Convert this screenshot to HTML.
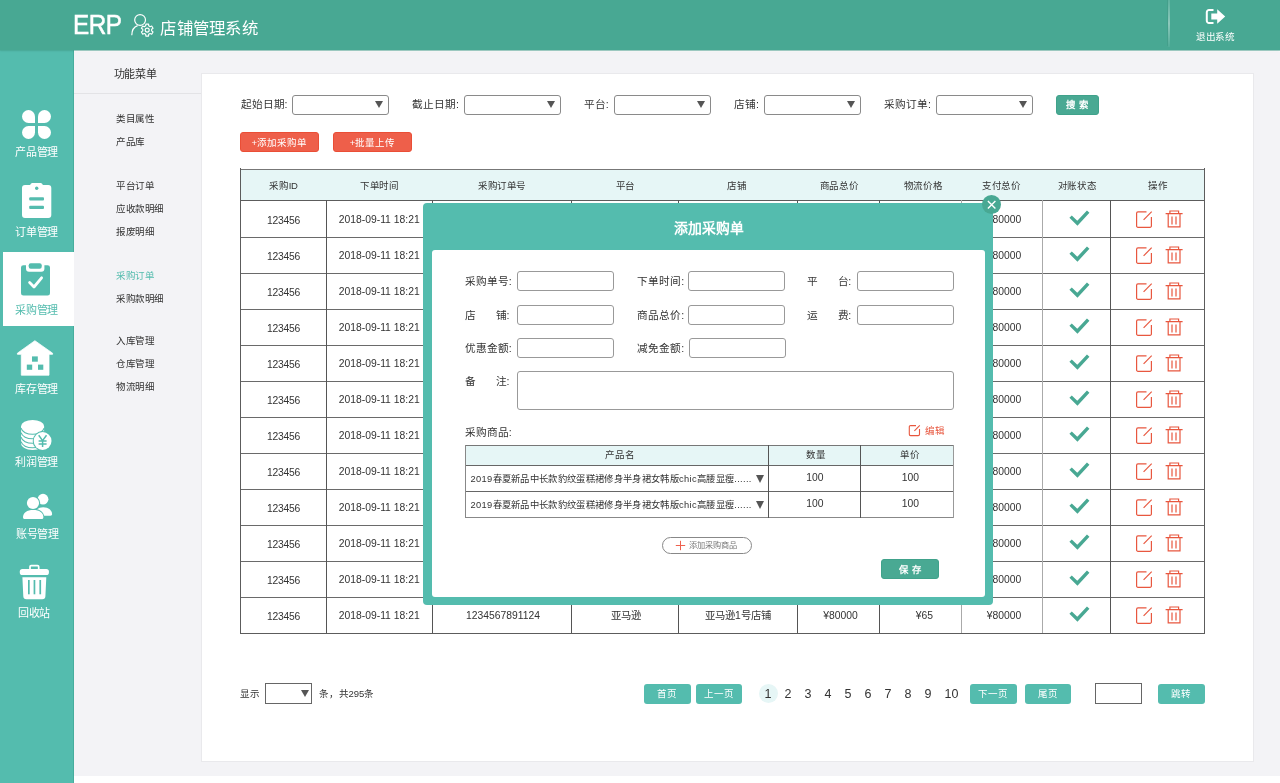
<!DOCTYPE html>
<html lang="zh-CN"><head><meta charset="utf-8"><title>ERP</title><style>
*{box-sizing:border-box;margin:0;padding:0}
html,body{width:1280px;height:783px;overflow:hidden;background:#fff}
body{font-family:"Liberation Sans",sans-serif;color:#333;position:relative;font-size:10.67px}
.abs,.abs *{position:absolute}
div,span,svg{position:absolute}
.t{white-space:nowrap;line-height:1}
.c{transform:translate(-50%,-50%)}
.cy{transform:translateY(-50%)}
#hdr{left:0;top:0;width:1280px;height:50px;background:#48a893;box-shadow:0 1px 0 rgba(72,168,147,.45),0 1px 2px rgba(0,0,0,.10)}
#side{left:0;top:50px;width:74px;height:733px;background:#54bcae;border-right:1px solid #46ad9d}
#sub{left:74px;top:50px;width:1206px;height:725.5px;background:#f3f3f6}
#panel{left:201px;top:73px;width:1053px;height:689px;background:#fff;border:1px solid #e9e9ec}
.sl{color:#fff;font-size:11px;left:36.6px;letter-spacing:-0.2px}
.mi{left:116px;font-size:9.5px;color:#333;letter-spacing:-0.5px}
.sel{height:20px;width:97px;border:1px solid #8a8a8a;border-radius:3px;background:#fff}
.tri{width:0;height:0;border-left:4px solid transparent;border-right:4px solid transparent;border-top:7px solid #555}
.inp{height:20px;width:97px;border:1px solid #999;border-radius:3px;background:#fff}
.lab{font-size:10.67px;color:#333}
.rbtn{height:20px;background:#ee5f4a;border:1px solid #ea4e36;border-radius:3px;top:132px}
.rbtn span{color:#fff;font-size:9.5px;left:50%;top:calc(50% + 0.8px)}
.gbtn{background:#49a993;border:1px solid #40a28b;border-radius:3px}
.gbtn span{color:#fff;left:50%;top:50%}
.pbtn{background:#54bcae;border-radius:3px;height:20px;top:683.5px;width:46.5px}
.pbtn span{color:#fff;font-size:9.5px;left:50%;top:50%}
.pn{font-size:12.5px;color:#333;top:693.5px}
.th{font-size:9.5px;color:#333;top:185.5px;letter-spacing:-0.35px}
.td{font-size:10.35px;color:#333}
.hl{height:1px;background:#666;left:240px;width:965px}
.vl{width:1px;background:#555;top:169px;height:464px}
</style></head><body><div id="wrap" style="left:0;top:0;width:1280px;height:783px;will-change:transform">
<div id="sub"></div>
<div style="left:74px;top:93px;width:127px;height:1px;background:#e3e3e6"></div>
<div style="left:74px;top:51px;width:1206px;height:1px;background:rgba(255,255,255,.75)"></div>
<div id="panel"></div>
<div id="side"></div>
<div id="hdr"></div>
<span class="t" style="left:73.2px;top:11.7px;font-size:27px;color:#fff;letter-spacing:-0.6px;transform-origin:0 0;transform:scaleX(.9);-webkit-text-stroke:0.5px #fff">ERP</span>
<svg style="left:128px;top:12px" width="30" height="26" viewBox="128 12 30 26" fill="none" stroke="#fff" stroke-width="1.2">
<circle cx="140.1" cy="20" r="5.4"/>
<path d="M131.8 35.2 C131.8 30 134 26.8 137.6 25.6"/>
<circle cx="147.2" cy="30.1" r="6.6" fill="#48a893" stroke="none"/><path d="M151.63 30.90 L153.02 31.92 L151.69 34.23 L150.10 33.54 L148.72 34.33 L148.53 36.05 L145.87 36.05 L145.68 34.33 L144.30 33.54 L142.71 34.23 L141.38 31.92 L142.77 30.90 L142.77 29.30 L141.38 28.28 L142.71 25.97 L144.30 26.66 L145.68 25.87 L145.87 24.15 L148.53 24.15 L148.72 25.87 L150.10 26.66 L151.69 25.97 L153.02 28.28 L151.63 29.30 Z" stroke-linejoin="round" stroke-width="1.15"/><circle cx="147.2" cy="30.1" r="2" stroke-width="1.15"/>
</svg>
<span class="t" style="left:160.3px;top:20.4px;font-size:16.4px;letter-spacing:0.3px;color:#fff">店铺管理系统</span>
<div style="left:1168px;top:0;width:2px;height:47px;background:linear-gradient(to bottom,rgba(255,255,255,.12),rgba(255,255,255,.38) 50%,rgba(255,255,255,.05))"></div>
<div style="left:1167px;top:0;width:1px;height:46px;background:rgba(0,0,0,.05)"></div>
<svg style="left:1204px;top:7px" width="24" height="20" viewBox="1204 7 24 20">
<path d="M1213.5 10 H1209 a2.2 2.2 0 0 0 -2.2 2.2 V20.8 a2.2 2.2 0 0 0 2.2 2.2 H1213.5" fill="none" stroke="#fff" stroke-width="2"/>
<path d="M1211.3 13.6 H1217.2 V9.2 L1225.2 16.5 L1217.2 23.8 V19.4 H1211.3 Z" fill="#fff"/>
</svg>
<span class="t c" style="left:1215.2px;top:37.45px;font-size:9.6px;letter-spacing:-0.4px;color:#fff">退出系统</span>
<div style="left:3px;top:252px;width:71px;height:73.5px;background:#fff"></div>
<div style="left:22px;top:110px;width:13px;height:13px;background:#fff;border-radius:50% 50% 0 50%"></div>
<div style="left:38px;top:110px;width:13px;height:13px;background:#fff;border-radius:50% 50% 50% 0"></div>
<div style="left:22px;top:125.5px;width:13px;height:13px;background:#fff;border-radius:50% 0 50% 50%"></div>
<div style="left:38px;top:125.5px;width:13px;height:13px;background:#fff;border-radius:0 50% 50% 50%"></div>
<span class="t c sl" style="top:152px">产品管理</span>
<svg style="left:20px;top:181px" width="34" height="40" viewBox="20 181 34 40">
<path d="M25 185 H30.2 C30.6 183.6 31.6 183 33 183 H40 C41.4 183 42.4 183.6 42.8 185 H48.3 a3 3 0 0 1 3 3 V215 a3 3 0 0 1 -3 3 H25 a3 3 0 0 1 -3 -3 V188 a3 3 0 0 1 3 -3 Z" fill="#fff"/>
<circle cx="36.7" cy="188.2" r="1.7" fill="#54bcae"/>
<rect x="29.2" y="197.3" width="14.8" height="3.1" rx="1" fill="#54bcae"/>
<rect x="29.2" y="205.8" width="14.8" height="3.1" rx="1" fill="#54bcae"/>
</svg>
<span class="t c sl" style="top:231.5px">订单管理</span>
<svg style="left:19px;top:261px" width="34" height="37" viewBox="19 261 34 37">
<path d="M23.4 265.2 H47.6 a2.4 2.4 0 0 1 2.4 2.4 V293.2 a2.4 2.4 0 0 1 -2.4 2.4 H23.4 a2.4 2.4 0 0 1 -2.4 -2.4 V267.6 a2.4 2.4 0 0 1 2.4 -2.4 Z" fill="#54bcae"/>
<path d="M26 264 H44.4 V268.8 a3 3 0 0 1 -3 3 H29 a3 3 0 0 1 -3 -3 Z" fill="#fff"/>
<rect x="28.7" y="263.2" width="13" height="5.6" rx="2" fill="#54bcae"/>
<path d="M29.6 282.6 L34 287 L41.6 277.8" fill="none" stroke="#fff" stroke-width="2.8" stroke-linecap="round" stroke-linejoin="round"/>
</svg>
<span class="t c sl" style="top:309.5px;color:#54bcae">采购管理</span>
<svg style="left:16px;top:339px" width="40" height="38" viewBox="16 339 40 38">
<path d="M34.9 340.7 L52.6 353.2 V354.3 H49 V375.2 H21.3 V354.3 H17.4 V353.2 Z" fill="#fff" stroke="#fff" stroke-width="0.8" stroke-linejoin="round"/>
<rect x="32" y="356.4" width="5.8" height="5.3" fill="#54bcae"/>
<rect x="26.8" y="364.6" width="5.4" height="5.2" fill="#54bcae"/>
<rect x="38" y="364.6" width="5.3" height="5.2" fill="#54bcae"/>
</svg>
<span class="t c sl" style="top:389px">库存管理</span>
<svg style="left:19px;top:418px" width="36" height="34" viewBox="19 418 36 34">
<path d="M21.1 426 V443.5 C21.1 447 26 449.9 32.6 449.9 C39.2 449.9 44.1 447 44.1 443.5 V426 Z" fill="#fff"/>
<ellipse cx="32.6" cy="425.9" rx="11.5" ry="5.9" fill="#fff"/>
<path d="M21.1 428.2 C22 432 27 434.3 32.6 434.3 C38.2 434.3 43.2 432 44.1 428.2" fill="none" stroke="#54bcae" stroke-width="1.1"/>
<path d="M21.1 432.7 C22 436.5 27 438.8 32.6 438.8 C38.2 438.8 43.2 436.5 44.1 432.7" fill="none" stroke="#54bcae" stroke-width="1.1"/>
<path d="M21.1 437.2 C22 441 27 443.3 32.6 443.3 C38.2 443.3 43.2 441 44.1 437.2" fill="none" stroke="#54bcae" stroke-width="1.1"/>
<path d="M21.1 441.7 C22 445.5 27 447.8 32.6 447.8 C38.2 447.8 43.2 445.5 44.1 441.7" fill="none" stroke="#54bcae" stroke-width="1.1"/>
<circle cx="42.6" cy="441" r="9.9" fill="#54bcae"/>
<circle cx="42.6" cy="441" r="8.9" fill="#fff"/>
<path d="M38.7 435.3 L42.6 440.6 L46.5 435.3 M42.6 440.6 V447 M38.6 441 H46.6 M38.6 444 H46.6" fill="none" stroke="#54bcae" stroke-width="1.5"/>
</svg>
<span class="t c sl" style="top:462px">利润管理</span>
<svg style="left:20px;top:491px" width="36" height="31" viewBox="20 491 36 31">
<circle cx="43" cy="499.2" r="5.4" fill="#fff"/>
<path d="M35 515.7 C35 510.5 38 507.2 43.2 507.2 C48.6 507.2 52.1 510.6 52.1 514 C52.1 515 51.5 515.7 50.5 515.7 Z" fill="#fff"/>
<circle cx="33" cy="503" r="7.2" fill="#54bcae"/>
<path d="M22 520.2 C21 513 26 508.7 33.2 508.7 C40.5 508.7 45.5 513 44.3 520.2 Z" fill="#54bcae"/>
<circle cx="33" cy="503" r="6.1" fill="#fff"/>
<path d="M23 517.2 C23 512.6 27 509.9 33.2 509.9 C39.4 509.9 43.4 512.6 43.4 517.2 C43.4 518.4 42.6 519.1 41.4 519.1 H25 C23.8 519.1 23 518.4 23 517.2 Z" fill="#fff"/>
</svg>
<span class="t c sl" style="top:533.5px;left:37.5px">账号管理</span>
<svg style="left:18px;top:563px" width="34" height="38" viewBox="18 563 34 38">
<path d="M30 569.5 V566.8 a1.2 1.2 0 0 1 1.2 -1.2 H37.5 a1.2 1.2 0 0 1 1.2 1.2 V569.5" fill="none" stroke="#fff" stroke-width="1.7"/>
<rect x="19.8" y="568.9" width="29.1" height="6.2" rx="2.6" fill="#fff"/>
<path d="M22.4 577.3 H46.3 L45.4 596.2 a3.1 3.1 0 0 1 -3.1 3 H26.4 a3.1 3.1 0 0 1 -3.1 -3 Z" fill="#fff"/>
<rect x="28" y="580" width="1.7" height="14.3" fill="#54bcae"/>
<rect x="33.6" y="580" width="1.7" height="14.3" fill="#54bcae"/>
<rect x="39.4" y="580" width="1.7" height="14.3" fill="#54bcae"/>
</svg>
<span class="t c sl" style="top:613px;left:34px">回收站</span>
<span class="t cy" style="left:113.6px;top:74px;font-size:11px;letter-spacing:-0.3px;color:#333">功能菜单</span>
<span class="t cy mi" style="top:118.5px;color:#333">类目属性</span>
<span class="t cy mi" style="top:141.5px;color:#333">产品库</span>
<span class="t cy mi" style="top:185.5px;color:#333">平台订单</span>
<span class="t cy mi" style="top:209px;color:#333">应收款明细</span>
<span class="t cy mi" style="top:232px;color:#333">报废明细</span>
<span class="t cy mi" style="top:275.5px;color:#54bcae">采购订单</span>
<span class="t cy mi" style="top:298.5px;color:#333">采购款明细</span>
<span class="t cy mi" style="top:340.5px;color:#333">入库管理</span>
<span class="t cy mi" style="top:363.5px;color:#333">仓库管理</span>
<span class="t cy mi" style="top:387px;color:#333">物流明细</span>
<span class="t cy lab" style="left:240.5px;top:103.8px">起始日期:</span>
<div class="sel" style="left:292px;top:95px"></div>
<div class="tri" style="left:374.5px;top:100.5px"></div>
<span class="t cy lab" style="left:412px;top:103.8px">截止日期:</span>
<div class="sel" style="left:464px;top:95px"></div>
<div class="tri" style="left:546.5px;top:100.5px"></div>
<span class="t cy lab" style="left:583.8px;top:103.8px">平台:</span>
<div class="sel" style="left:614px;top:95px"></div>
<div class="tri" style="left:696.5px;top:100.5px"></div>
<span class="t cy lab" style="left:734px;top:103.8px">店铺:</span>
<div class="sel" style="left:764px;top:95px"></div>
<div class="tri" style="left:846.5px;top:100.5px"></div>
<span class="t cy lab" style="left:884px;top:103.8px">采购订单:</span>
<div class="sel" style="left:936px;top:95px"></div>
<div class="tri" style="left:1018.5px;top:100.5px"></div>
<div class="gbtn" style="left:1056px;top:95px;width:42.5px;height:20px"><span class="t c" style="font-size:9.4px;font-weight:bold;letter-spacing:0.4px;margin-top:0.3px">搜 索</span></div>
<div class="rbtn" style="left:240px;width:78.5px"><span class="t c">+添加采购单</span></div>
<div class="rbtn" style="left:333.3px;width:78.7px"><span class="t c">+批量上传</span></div>
<div style="left:240px;top:168.5px;width:964.5px;height:31.5px;background:#e6f6f6"></div>
<span class="t c th" style="left:283.5px">采购ID</span>
<span class="t c th" style="left:379.5px">下单时间</span>
<span class="t c th" style="left:502.0px">采购订单号</span>
<span class="t c th" style="left:625.5px">平台</span>
<span class="t c th" style="left:737.0px">店铺</span>
<span class="t c th" style="left:839.0px">商品总价</span>
<span class="t c th" style="left:923.0px">物流价格</span>
<span class="t c th" style="left:1001.5px">支付总价</span>
<span class="t c th" style="left:1077.0px">对账状态</span>
<span class="t c th" style="left:1158.0px">操作</span>
<div class="hl" style="top:168.7px;background:#777;left:239.8px;width:965.3px"></div>
<div class="hl" style="top:199.8px;background:#5c5c5c;left:239.8px;width:965.3px"></div>
<div class="hl" style="top:236.7px;background:#6a6a6a;left:239.8px;width:965.3px"></div>
<div class="hl" style="top:272.7px;background:#6a6a6a;left:239.8px;width:965.3px"></div>
<div class="hl" style="top:308.7px;background:#6a6a6a;left:239.8px;width:965.3px"></div>
<div class="hl" style="top:344.7px;background:#6a6a6a;left:239.8px;width:965.3px"></div>
<div class="hl" style="top:380.7px;background:#6a6a6a;left:239.8px;width:965.3px"></div>
<div class="hl" style="top:416.7px;background:#6a6a6a;left:239.8px;width:965.3px"></div>
<div class="hl" style="top:452.7px;background:#6a6a6a;left:239.8px;width:965.3px"></div>
<div class="hl" style="top:488.7px;background:#6a6a6a;left:239.8px;width:965.3px"></div>
<div class="hl" style="top:524.7px;background:#6a6a6a;left:239.8px;width:965.3px"></div>
<div class="hl" style="top:560.7px;background:#6a6a6a;left:239.8px;width:965.3px"></div>
<div class="hl" style="top:596.7px;background:#6a6a6a;left:239.8px;width:965.3px"></div>
<div class="hl" style="top:632.7px;background:#5c5c5c;left:239.8px;width:965.3px"></div>
<div class="vl" style="left:239.8px;top:168.2px;height:465.5px;background:#5c5c5c"></div>
<div class="vl" style="left:326px;top:200px;height:433px;background:#555"></div>
<div class="vl" style="left:431.8px;top:200px;height:433px;background:#555"></div>
<div class="vl" style="left:571.3px;top:200px;height:433px;background:#555"></div>
<div class="vl" style="left:677.9px;top:200px;height:433px;background:#555"></div>
<div class="vl" style="left:796.7px;top:200px;height:433px;background:#555"></div>
<div class="vl" style="left:879.1px;top:200px;height:433px;background:#555"></div>
<div class="vl" style="left:960.8px;top:200px;height:433px;background:#aaa"></div>
<div class="vl" style="left:1042.4px;top:200px;height:433px;background:#aaa"></div>
<div class="vl" style="left:1110px;top:200px;height:433px;background:#555"></div>
<div class="vl" style="left:1204.1px;top:168.2px;height:465.5px;background:#5c5c5c"></div>
<span class="t c td" style="left:283.5px;top:220.7px;letter-spacing:-0.25px">123456</span>
<span class="t c td" style="left:379.2px;top:219.6px">2018-09-11 18:21</span>
<span class="t c td" style="left:503.0px;top:219.6px">1234567891124</span>
<span class="t c td" style="left:625.5px;top:219.6px">亚马逊</span>
<span class="t c td" style="left:738.0px;top:219.6px">亚马逊1号店铺</span>
<span class="t c td" style="left:840.5px;top:219.6px">¥80000</span>
<span class="t c td" style="left:924.5px;top:219.6px">¥65</span>
<span class="t c td" style="left:1004.0px;top:219.6px">¥80000</span>
<svg style="left:1066px;top:207px" width="28" height="24" viewBox="1066 6 28 24"><path d="M1070.6 15.6 l6.8 6.6 l10.8 -11.6" fill="none" stroke="#48a893" stroke-width="3.4"/></svg>
<svg style="left:1133px;top:207px" width="54" height="24" viewBox="1133 6 54 24" fill="none" stroke="#e8573f" stroke-width="1.2">
<path d="M1146.5 10.9 H1138 a1.4 1.4 0 0 0 -1.4 1.4 V24.9 a1.4 1.4 0 0 0 1.4 1.4 H1150 a1.4 1.4 0 0 0 1.4 -1.4 V16"/>
<path d="M1143.6 18.8 L1151.7 10.7"/>
<path d="M1165.6 12.7 H1182.6 M1169.9 12.5 V10 H1178.6 V12.5 M1168.2 13 V25.8 H1180 V13 M1172 15.4 V23.6 M1176 15.4 V23.6"/>
</svg>
<span class="t c td" style="left:283.5px;top:256.7px;letter-spacing:-0.25px">123456</span>
<span class="t c td" style="left:379.2px;top:255.6px">2018-09-11 18:21</span>
<span class="t c td" style="left:503.0px;top:255.6px">1234567891124</span>
<span class="t c td" style="left:625.5px;top:255.6px">亚马逊</span>
<span class="t c td" style="left:738.0px;top:255.6px">亚马逊1号店铺</span>
<span class="t c td" style="left:840.5px;top:255.6px">¥80000</span>
<span class="t c td" style="left:924.5px;top:255.6px">¥65</span>
<span class="t c td" style="left:1004.0px;top:255.6px">¥80000</span>
<svg style="left:1066px;top:243px" width="28" height="24" viewBox="1066 6 28 24"><path d="M1070.6 15.6 l6.8 6.6 l10.8 -11.6" fill="none" stroke="#48a893" stroke-width="3.4"/></svg>
<svg style="left:1133px;top:243px" width="54" height="24" viewBox="1133 6 54 24" fill="none" stroke="#e8573f" stroke-width="1.2">
<path d="M1146.5 10.9 H1138 a1.4 1.4 0 0 0 -1.4 1.4 V24.9 a1.4 1.4 0 0 0 1.4 1.4 H1150 a1.4 1.4 0 0 0 1.4 -1.4 V16"/>
<path d="M1143.6 18.8 L1151.7 10.7"/>
<path d="M1165.6 12.7 H1182.6 M1169.9 12.5 V10 H1178.6 V12.5 M1168.2 13 V25.8 H1180 V13 M1172 15.4 V23.6 M1176 15.4 V23.6"/>
</svg>
<span class="t c td" style="left:283.5px;top:292.70000000000005px;letter-spacing:-0.25px">123456</span>
<span class="t c td" style="left:379.2px;top:291.6px">2018-09-11 18:21</span>
<span class="t c td" style="left:503.0px;top:291.6px">1234567891124</span>
<span class="t c td" style="left:625.5px;top:291.6px">亚马逊</span>
<span class="t c td" style="left:738.0px;top:291.6px">亚马逊1号店铺</span>
<span class="t c td" style="left:840.5px;top:291.6px">¥80000</span>
<span class="t c td" style="left:924.5px;top:291.6px">¥65</span>
<span class="t c td" style="left:1004.0px;top:291.6px">¥80000</span>
<svg style="left:1066px;top:279px" width="28" height="24" viewBox="1066 6 28 24"><path d="M1070.6 15.6 l6.8 6.6 l10.8 -11.6" fill="none" stroke="#48a893" stroke-width="3.4"/></svg>
<svg style="left:1133px;top:279px" width="54" height="24" viewBox="1133 6 54 24" fill="none" stroke="#e8573f" stroke-width="1.2">
<path d="M1146.5 10.9 H1138 a1.4 1.4 0 0 0 -1.4 1.4 V24.9 a1.4 1.4 0 0 0 1.4 1.4 H1150 a1.4 1.4 0 0 0 1.4 -1.4 V16"/>
<path d="M1143.6 18.8 L1151.7 10.7"/>
<path d="M1165.6 12.7 H1182.6 M1169.9 12.5 V10 H1178.6 V12.5 M1168.2 13 V25.8 H1180 V13 M1172 15.4 V23.6 M1176 15.4 V23.6"/>
</svg>
<span class="t c td" style="left:283.5px;top:328.70000000000005px;letter-spacing:-0.25px">123456</span>
<span class="t c td" style="left:379.2px;top:327.6px">2018-09-11 18:21</span>
<span class="t c td" style="left:503.0px;top:327.6px">1234567891124</span>
<span class="t c td" style="left:625.5px;top:327.6px">亚马逊</span>
<span class="t c td" style="left:738.0px;top:327.6px">亚马逊1号店铺</span>
<span class="t c td" style="left:840.5px;top:327.6px">¥80000</span>
<span class="t c td" style="left:924.5px;top:327.6px">¥65</span>
<span class="t c td" style="left:1004.0px;top:327.6px">¥80000</span>
<svg style="left:1066px;top:315px" width="28" height="24" viewBox="1066 6 28 24"><path d="M1070.6 15.6 l6.8 6.6 l10.8 -11.6" fill="none" stroke="#48a893" stroke-width="3.4"/></svg>
<svg style="left:1133px;top:315px" width="54" height="24" viewBox="1133 6 54 24" fill="none" stroke="#e8573f" stroke-width="1.2">
<path d="M1146.5 10.9 H1138 a1.4 1.4 0 0 0 -1.4 1.4 V24.9 a1.4 1.4 0 0 0 1.4 1.4 H1150 a1.4 1.4 0 0 0 1.4 -1.4 V16"/>
<path d="M1143.6 18.8 L1151.7 10.7"/>
<path d="M1165.6 12.7 H1182.6 M1169.9 12.5 V10 H1178.6 V12.5 M1168.2 13 V25.8 H1180 V13 M1172 15.4 V23.6 M1176 15.4 V23.6"/>
</svg>
<span class="t c td" style="left:283.5px;top:364.70000000000005px;letter-spacing:-0.25px">123456</span>
<span class="t c td" style="left:379.2px;top:363.6px">2018-09-11 18:21</span>
<span class="t c td" style="left:503.0px;top:363.6px">1234567891124</span>
<span class="t c td" style="left:625.5px;top:363.6px">亚马逊</span>
<span class="t c td" style="left:738.0px;top:363.6px">亚马逊1号店铺</span>
<span class="t c td" style="left:840.5px;top:363.6px">¥80000</span>
<span class="t c td" style="left:924.5px;top:363.6px">¥65</span>
<span class="t c td" style="left:1004.0px;top:363.6px">¥80000</span>
<svg style="left:1066px;top:351px" width="28" height="24" viewBox="1066 6 28 24"><path d="M1070.6 15.6 l6.8 6.6 l10.8 -11.6" fill="none" stroke="#48a893" stroke-width="3.4"/></svg>
<svg style="left:1133px;top:351px" width="54" height="24" viewBox="1133 6 54 24" fill="none" stroke="#e8573f" stroke-width="1.2">
<path d="M1146.5 10.9 H1138 a1.4 1.4 0 0 0 -1.4 1.4 V24.9 a1.4 1.4 0 0 0 1.4 1.4 H1150 a1.4 1.4 0 0 0 1.4 -1.4 V16"/>
<path d="M1143.6 18.8 L1151.7 10.7"/>
<path d="M1165.6 12.7 H1182.6 M1169.9 12.5 V10 H1178.6 V12.5 M1168.2 13 V25.8 H1180 V13 M1172 15.4 V23.6 M1176 15.4 V23.6"/>
</svg>
<span class="t c td" style="left:283.5px;top:400.70000000000005px;letter-spacing:-0.25px">123456</span>
<span class="t c td" style="left:379.2px;top:399.6px">2018-09-11 18:21</span>
<span class="t c td" style="left:503.0px;top:399.6px">1234567891124</span>
<span class="t c td" style="left:625.5px;top:399.6px">亚马逊</span>
<span class="t c td" style="left:738.0px;top:399.6px">亚马逊1号店铺</span>
<span class="t c td" style="left:840.5px;top:399.6px">¥80000</span>
<span class="t c td" style="left:924.5px;top:399.6px">¥65</span>
<span class="t c td" style="left:1004.0px;top:399.6px">¥80000</span>
<svg style="left:1066px;top:387px" width="28" height="24" viewBox="1066 6 28 24"><path d="M1070.6 15.6 l6.8 6.6 l10.8 -11.6" fill="none" stroke="#48a893" stroke-width="3.4"/></svg>
<svg style="left:1133px;top:387px" width="54" height="24" viewBox="1133 6 54 24" fill="none" stroke="#e8573f" stroke-width="1.2">
<path d="M1146.5 10.9 H1138 a1.4 1.4 0 0 0 -1.4 1.4 V24.9 a1.4 1.4 0 0 0 1.4 1.4 H1150 a1.4 1.4 0 0 0 1.4 -1.4 V16"/>
<path d="M1143.6 18.8 L1151.7 10.7"/>
<path d="M1165.6 12.7 H1182.6 M1169.9 12.5 V10 H1178.6 V12.5 M1168.2 13 V25.8 H1180 V13 M1172 15.4 V23.6 M1176 15.4 V23.6"/>
</svg>
<span class="t c td" style="left:283.5px;top:436.70000000000005px;letter-spacing:-0.25px">123456</span>
<span class="t c td" style="left:379.2px;top:435.6px">2018-09-11 18:21</span>
<span class="t c td" style="left:503.0px;top:435.6px">1234567891124</span>
<span class="t c td" style="left:625.5px;top:435.6px">亚马逊</span>
<span class="t c td" style="left:738.0px;top:435.6px">亚马逊1号店铺</span>
<span class="t c td" style="left:840.5px;top:435.6px">¥80000</span>
<span class="t c td" style="left:924.5px;top:435.6px">¥65</span>
<span class="t c td" style="left:1004.0px;top:435.6px">¥80000</span>
<svg style="left:1066px;top:423px" width="28" height="24" viewBox="1066 6 28 24"><path d="M1070.6 15.6 l6.8 6.6 l10.8 -11.6" fill="none" stroke="#48a893" stroke-width="3.4"/></svg>
<svg style="left:1133px;top:423px" width="54" height="24" viewBox="1133 6 54 24" fill="none" stroke="#e8573f" stroke-width="1.2">
<path d="M1146.5 10.9 H1138 a1.4 1.4 0 0 0 -1.4 1.4 V24.9 a1.4 1.4 0 0 0 1.4 1.4 H1150 a1.4 1.4 0 0 0 1.4 -1.4 V16"/>
<path d="M1143.6 18.8 L1151.7 10.7"/>
<path d="M1165.6 12.7 H1182.6 M1169.9 12.5 V10 H1178.6 V12.5 M1168.2 13 V25.8 H1180 V13 M1172 15.4 V23.6 M1176 15.4 V23.6"/>
</svg>
<span class="t c td" style="left:283.5px;top:472.70000000000005px;letter-spacing:-0.25px">123456</span>
<span class="t c td" style="left:379.2px;top:471.6px">2018-09-11 18:21</span>
<span class="t c td" style="left:503.0px;top:471.6px">1234567891124</span>
<span class="t c td" style="left:625.5px;top:471.6px">亚马逊</span>
<span class="t c td" style="left:738.0px;top:471.6px">亚马逊1号店铺</span>
<span class="t c td" style="left:840.5px;top:471.6px">¥80000</span>
<span class="t c td" style="left:924.5px;top:471.6px">¥65</span>
<span class="t c td" style="left:1004.0px;top:471.6px">¥80000</span>
<svg style="left:1066px;top:459px" width="28" height="24" viewBox="1066 6 28 24"><path d="M1070.6 15.6 l6.8 6.6 l10.8 -11.6" fill="none" stroke="#48a893" stroke-width="3.4"/></svg>
<svg style="left:1133px;top:459px" width="54" height="24" viewBox="1133 6 54 24" fill="none" stroke="#e8573f" stroke-width="1.2">
<path d="M1146.5 10.9 H1138 a1.4 1.4 0 0 0 -1.4 1.4 V24.9 a1.4 1.4 0 0 0 1.4 1.4 H1150 a1.4 1.4 0 0 0 1.4 -1.4 V16"/>
<path d="M1143.6 18.8 L1151.7 10.7"/>
<path d="M1165.6 12.7 H1182.6 M1169.9 12.5 V10 H1178.6 V12.5 M1168.2 13 V25.8 H1180 V13 M1172 15.4 V23.6 M1176 15.4 V23.6"/>
</svg>
<span class="t c td" style="left:283.5px;top:508.70000000000005px;letter-spacing:-0.25px">123456</span>
<span class="t c td" style="left:379.2px;top:507.6px">2018-09-11 18:21</span>
<span class="t c td" style="left:503.0px;top:507.6px">1234567891124</span>
<span class="t c td" style="left:625.5px;top:507.6px">亚马逊</span>
<span class="t c td" style="left:738.0px;top:507.6px">亚马逊1号店铺</span>
<span class="t c td" style="left:840.5px;top:507.6px">¥80000</span>
<span class="t c td" style="left:924.5px;top:507.6px">¥65</span>
<span class="t c td" style="left:1004.0px;top:507.6px">¥80000</span>
<svg style="left:1066px;top:495px" width="28" height="24" viewBox="1066 6 28 24"><path d="M1070.6 15.6 l6.8 6.6 l10.8 -11.6" fill="none" stroke="#48a893" stroke-width="3.4"/></svg>
<svg style="left:1133px;top:495px" width="54" height="24" viewBox="1133 6 54 24" fill="none" stroke="#e8573f" stroke-width="1.2">
<path d="M1146.5 10.9 H1138 a1.4 1.4 0 0 0 -1.4 1.4 V24.9 a1.4 1.4 0 0 0 1.4 1.4 H1150 a1.4 1.4 0 0 0 1.4 -1.4 V16"/>
<path d="M1143.6 18.8 L1151.7 10.7"/>
<path d="M1165.6 12.7 H1182.6 M1169.9 12.5 V10 H1178.6 V12.5 M1168.2 13 V25.8 H1180 V13 M1172 15.4 V23.6 M1176 15.4 V23.6"/>
</svg>
<span class="t c td" style="left:283.5px;top:544.7px;letter-spacing:-0.25px">123456</span>
<span class="t c td" style="left:379.2px;top:543.6px">2018-09-11 18:21</span>
<span class="t c td" style="left:503.0px;top:543.6px">1234567891124</span>
<span class="t c td" style="left:625.5px;top:543.6px">亚马逊</span>
<span class="t c td" style="left:738.0px;top:543.6px">亚马逊1号店铺</span>
<span class="t c td" style="left:840.5px;top:543.6px">¥80000</span>
<span class="t c td" style="left:924.5px;top:543.6px">¥65</span>
<span class="t c td" style="left:1004.0px;top:543.6px">¥80000</span>
<svg style="left:1066px;top:531px" width="28" height="24" viewBox="1066 6 28 24"><path d="M1070.6 15.6 l6.8 6.6 l10.8 -11.6" fill="none" stroke="#48a893" stroke-width="3.4"/></svg>
<svg style="left:1133px;top:531px" width="54" height="24" viewBox="1133 6 54 24" fill="none" stroke="#e8573f" stroke-width="1.2">
<path d="M1146.5 10.9 H1138 a1.4 1.4 0 0 0 -1.4 1.4 V24.9 a1.4 1.4 0 0 0 1.4 1.4 H1150 a1.4 1.4 0 0 0 1.4 -1.4 V16"/>
<path d="M1143.6 18.8 L1151.7 10.7"/>
<path d="M1165.6 12.7 H1182.6 M1169.9 12.5 V10 H1178.6 V12.5 M1168.2 13 V25.8 H1180 V13 M1172 15.4 V23.6 M1176 15.4 V23.6"/>
</svg>
<span class="t c td" style="left:283.5px;top:580.7px;letter-spacing:-0.25px">123456</span>
<span class="t c td" style="left:379.2px;top:579.6px">2018-09-11 18:21</span>
<span class="t c td" style="left:503.0px;top:579.6px">1234567891124</span>
<span class="t c td" style="left:625.5px;top:579.6px">亚马逊</span>
<span class="t c td" style="left:738.0px;top:579.6px">亚马逊1号店铺</span>
<span class="t c td" style="left:840.5px;top:579.6px">¥80000</span>
<span class="t c td" style="left:924.5px;top:579.6px">¥65</span>
<span class="t c td" style="left:1004.0px;top:579.6px">¥80000</span>
<svg style="left:1066px;top:567px" width="28" height="24" viewBox="1066 6 28 24"><path d="M1070.6 15.6 l6.8 6.6 l10.8 -11.6" fill="none" stroke="#48a893" stroke-width="3.4"/></svg>
<svg style="left:1133px;top:567px" width="54" height="24" viewBox="1133 6 54 24" fill="none" stroke="#e8573f" stroke-width="1.2">
<path d="M1146.5 10.9 H1138 a1.4 1.4 0 0 0 -1.4 1.4 V24.9 a1.4 1.4 0 0 0 1.4 1.4 H1150 a1.4 1.4 0 0 0 1.4 -1.4 V16"/>
<path d="M1143.6 18.8 L1151.7 10.7"/>
<path d="M1165.6 12.7 H1182.6 M1169.9 12.5 V10 H1178.6 V12.5 M1168.2 13 V25.8 H1180 V13 M1172 15.4 V23.6 M1176 15.4 V23.6"/>
</svg>
<span class="t c td" style="left:283.5px;top:616.7px;letter-spacing:-0.25px">123456</span>
<span class="t c td" style="left:379.2px;top:615.6px">2018-09-11 18:21</span>
<span class="t c td" style="left:503.0px;top:615.6px">1234567891124</span>
<span class="t c td" style="left:625.5px;top:615.6px">亚马逊</span>
<span class="t c td" style="left:738.0px;top:615.6px">亚马逊1号店铺</span>
<span class="t c td" style="left:840.5px;top:615.6px">¥80000</span>
<span class="t c td" style="left:924.5px;top:615.6px">¥65</span>
<span class="t c td" style="left:1004.0px;top:615.6px">¥80000</span>
<svg style="left:1066px;top:603px" width="28" height="24" viewBox="1066 6 28 24"><path d="M1070.6 15.6 l6.8 6.6 l10.8 -11.6" fill="none" stroke="#48a893" stroke-width="3.4"/></svg>
<svg style="left:1133px;top:603px" width="54" height="24" viewBox="1133 6 54 24" fill="none" stroke="#e8573f" stroke-width="1.2">
<path d="M1146.5 10.9 H1138 a1.4 1.4 0 0 0 -1.4 1.4 V24.9 a1.4 1.4 0 0 0 1.4 1.4 H1150 a1.4 1.4 0 0 0 1.4 -1.4 V16"/>
<path d="M1143.6 18.8 L1151.7 10.7"/>
<path d="M1165.6 12.7 H1182.6 M1169.9 12.5 V10 H1178.6 V12.5 M1168.2 13 V25.8 H1180 V13 M1172 15.4 V23.6 M1176 15.4 V23.6"/>
</svg>
<div style="left:423.3px;top:203.3px;width:569.7px;height:401.9px;background:#54bcae;border-radius:4px"></div>
<div style="left:432px;top:250px;width:553.3px;height:347.2px;background:#fff;border-radius:3px"></div>
<span class="t c" style="left:708.5px;top:229px;font-size:13.8px;font-weight:bold;color:#fff">添加采购单</span>
<div style="left:982px;top:194.7px;width:19.3px;height:19.3px;border-radius:50%;background:#48a893"></div>
<svg style="left:982px;top:194.7px" width="19.3" height="19.3" viewBox="0 0 19.3 19.3"><path d="M5.9 5.9 L13.4 13.4 M13.4 5.9 L5.9 13.4" stroke="#fff" stroke-width="1.4" fill="none"/></svg>
<span class="t cy lab" style="left:464.8px;top:281px">采购单号:</span>
<div class="inp" style="left:517px;top:271px"></div>
<span class="t cy lab" style="left:637.2px;top:281px">下单时间:</span>
<div class="inp" style="left:688px;top:271px"></div>
<span class="t cy lab" style="left:806.7px;top:281px;letter-spacing:-0.6px">平　　台:</span>
<div class="inp" style="left:857px;top:271px"></div>
<span class="t cy lab" style="left:464.8px;top:315px;letter-spacing:-0.6px">店　　铺:</span>
<div class="inp" style="left:517px;top:305px"></div>
<span class="t cy lab" style="left:637.2px;top:315px">商品总价:</span>
<div class="inp" style="left:688px;top:305px"></div>
<span class="t cy lab" style="left:806.7px;top:315px;letter-spacing:-0.6px">运　　费:</span>
<div class="inp" style="left:857px;top:305px"></div>
<span class="t cy lab" style="left:464.8px;top:348px">优惠金额:</span>
<div class="inp" style="left:517px;top:338px"></div>
<span class="t cy lab" style="left:637.2px;top:348px">减免金额:</span>
<div class="inp" style="left:689px;top:338px"></div>
<span class="t cy lab" style="left:464.8px;top:380.5px;letter-spacing:-0.6px">备　　注:</span>
<div class="inp" style="left:517px;top:371px;width:437px;height:39px"></div>
<span class="t cy lab" style="left:464.8px;top:432px">采购商品:</span>
<svg style="left:907px;top:423px" width="16" height="15" viewBox="907 423 16 15" fill="none" stroke="#e8573f" stroke-width="1.1">
<path d="M916 425.6 H910.6 a1.3 1.3 0 0 0 -1.3 1.3 V434.3 a1.3 1.3 0 0 0 1.3 1.3 H918.2 a1.3 1.3 0 0 0 1.3 -1.3 V429"/><path d="M914.4 430.8 L919.8 425.4"/></svg>
<span class="t cy" style="left:925.3px;top:431px;font-size:9.5px;color:#e8573f">编辑</span>
<div style="left:465px;top:445px;width:488.5px;height:20px;background:#e6f6f6"></div>
<div style="left:465px;top:445px;width:489px;height:1px;background:#777"></div>
<div style="left:465px;top:465px;width:489px;height:1px;background:#666"></div>
<div style="left:465px;top:491px;width:489px;height:1px;background:#666"></div>
<div style="left:465px;top:517px;width:489px;height:1px;background:#888"></div>
<div style="left:465px;top:445px;width:1px;height:73px;background:#888"></div>
<div style="left:768px;top:445px;width:1px;height:73px;background:#555"></div>
<div style="left:860px;top:445px;width:1px;height:73px;background:#555"></div>
<div style="left:953px;top:445px;width:1px;height:73px;background:#999"></div>
<span class="t c" style="left:620px;top:455px;font-size:9.5px;color:#333">产品名</span>
<span class="t c" style="left:815.5px;top:455px;font-size:9.5px;color:#333">数量</span>
<span class="t c" style="left:909.5px;top:455px;font-size:9.5px;color:#333">单价</span>
<span class="t cy" style="left:470.5px;top:479.5px;font-size:9.3px;letter-spacing:0.33px;color:#333">2019春夏新品中长款豹纹蛋糕裙修身半身裙女韩版chic高腰显瘦......</span>
<div class="tri" style="left:755.5px;top:475px;border-left-width:4.5px;border-right-width:4.5px;border-top-width:8px"></div>
<span class="t c td" style="left:815px;top:477.5px">100</span>
<span class="t c td" style="left:910.5px;top:477.5px">100</span>
<span class="t cy" style="left:470.5px;top:505.5px;font-size:9.3px;letter-spacing:0.33px;color:#333">2019春夏新品中长款豹纹蛋糕裙修身半身裙女韩版chic高腰显瘦......</span>
<div class="tri" style="left:755.5px;top:501px;border-left-width:4.5px;border-right-width:4.5px;border-top-width:8px"></div>
<span class="t c td" style="left:815px;top:503.5px">100</span>
<span class="t c td" style="left:910.5px;top:503.5px">100</span>
<div style="left:662.2px;top:537.2px;width:90px;height:16.6px;border:1px solid #888;border-radius:9px;background:#fff"></div>
<svg style="left:675px;top:540px" width="11" height="11" viewBox="0 0 11 11"><path d="M5.5 0.8 V10.2 M0.8 5.5 H10.2" stroke="#ee614e" stroke-width="1"/></svg>
<span class="t cy" style="left:688.5px;top:545.5px;font-size:8.2px;color:#777">添加采购商品</span>
<div class="gbtn" style="left:881.3px;top:559px;width:57.5px;height:20px"><span class="t c" style="font-size:9.4px;font-weight:bold;letter-spacing:0.4px;margin-top:0.6px">保 存</span></div>
<span class="t cy" style="left:240px;top:693.5px;font-size:9.5px">显示</span>
<div style="left:265px;top:683.3px;width:47px;height:20.4px;border:1px solid #666;background:#fff"></div>
<div class="tri" style="left:301.3px;top:690px;border-left-width:4.2px;border-right-width:4.2px;border-top-width:7.5px"></div>
<span class="t cy" style="left:318.5px;top:693.5px;font-size:9.5px">条，共295条</span>
<div class="pbtn" style="left:644px"><span class="t c">首页</span></div>
<div class="pbtn" style="left:695.5px"><span class="t c">上一页</span></div>
<div class="pbtn" style="left:970px"><span class="t c">下一页</span></div>
<div class="pbtn" style="left:1024.8px"><span class="t c">尾页</span></div>
<div class="pbtn" style="left:1158px"><span class="t c">跳转</span></div>
<div style="left:758.5px;top:684px;width:19px;height:19px;border-radius:50%;background:#e6f6f6"></div>
<span class="t c pn" style="left:768px">1</span>
<span class="t c pn" style="left:788px">2</span>
<span class="t c pn" style="left:808px">3</span>
<span class="t c pn" style="left:828px">4</span>
<span class="t c pn" style="left:848px">5</span>
<span class="t c pn" style="left:868px">6</span>
<span class="t c pn" style="left:888px">7</span>
<span class="t c pn" style="left:908px">8</span>
<span class="t c pn" style="left:928px">9</span>
<span class="t c pn" style="left:951.5px">10</span>
<div style="left:1095px;top:683.3px;width:47px;height:20.4px;border:1px solid #666;background:#fff"></div>
</div></body></html>
